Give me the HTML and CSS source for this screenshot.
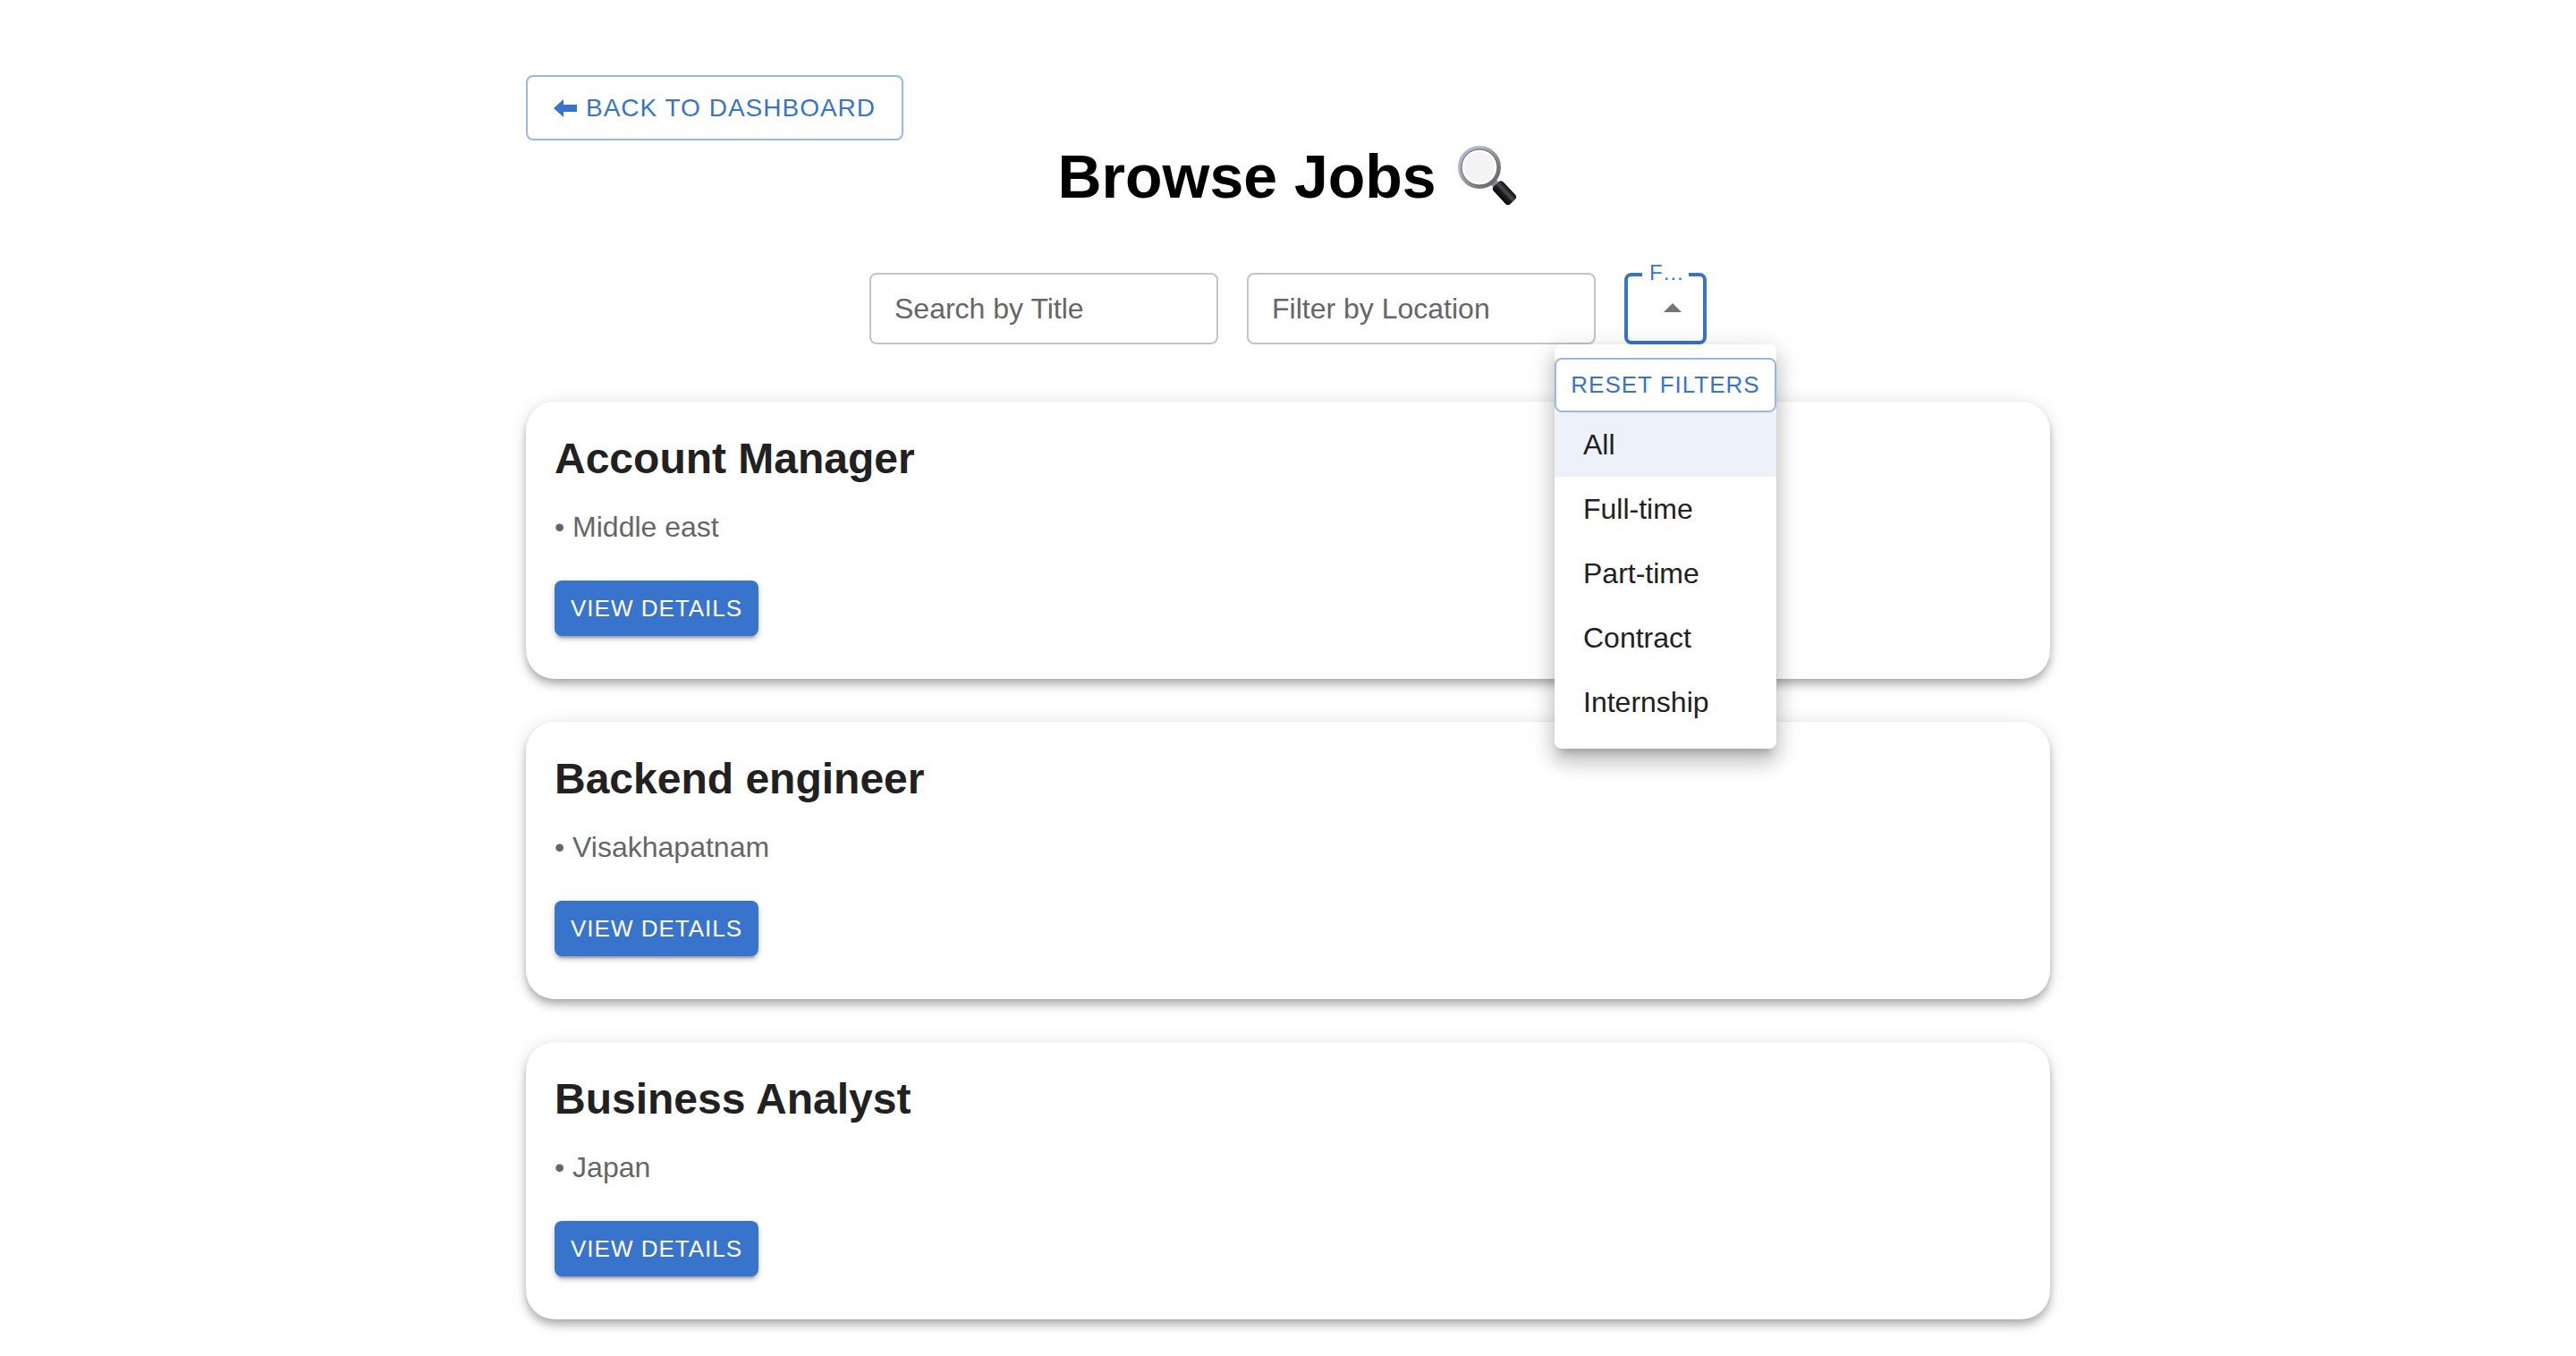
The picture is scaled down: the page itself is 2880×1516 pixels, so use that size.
FILE: index.html
```html
<!DOCTYPE html>
<html lang="en">
<head>
<meta charset="utf-8">
<title>Browse Jobs</title>
<meta name="viewport" content="width=device-width, initial-scale=1">
<link rel="stylesheet" href="styles.css">
</head>
<body>
<main class="container">
  <button type="button" class="btn btn-outlined">
    <svg class="btn-arrow" viewBox="0 0 26 20" aria-hidden="true"><path d="M0 10 11 0v6h15v8H11v6z"/></svg>
    <span>BACK TO DASHBOARD</span>
  </button>

  <h1 class="page-title">
    <span>Browse Jobs</span>
    <svg class="title-icon" viewBox="0 0 68 68" aria-hidden="true">
      <defs>
        <linearGradient id="rim" x1="0" y1="0" x2="1" y2="1">
          <stop offset="0" stop-color="#8fb4ea"/>
          <stop offset=".25" stop-color="#b4b8be"/>
          <stop offset="1" stop-color="#58595c"/>
        </linearGradient>
        <linearGradient id="grip" x1="0" y1="1" x2="0" y2="0">
          <stop offset="0" stop-color="#08090a"/>
          <stop offset=".4" stop-color="#1b1d20"/>
          <stop offset=".6" stop-color="#4a4e53"/>
          <stop offset="1" stop-color="#0c0d0e"/>
        </linearGradient>
      </defs>
      <path d="M36 43l6-6 5 5-6 6z" fill="#8c8e91"/>
      <rect x="39" y="45" width="27" height="15" rx="4" transform="rotate(47 52 52)" fill="url(#grip)"/>
      <circle cx="24" cy="24" r="22" fill="#f3f3f3" stroke="url(#rim)" stroke-width="4"/>
      <circle cx="24" cy="24" r="20" fill="none" stroke="#5b5d60" stroke-width="1"/>
      <circle cx="24" cy="24" r="18" fill="none" stroke="#fff" stroke-width="2"/>
    </svg>
  </h1>

  <form class="filters">
    <input class="field" type="text" aria-label="Search by Title" placeholder="Search by Title">
    <input class="field" type="text" aria-label="Filter by Location" placeholder="Filter by Location">
    <div class="select-field">
      <select class="select" id="job-type">
        <option value="" label=" "></option>
        <option>Full-time</option>
        <option>Part-time</option>
        <option>Contract</option>
        <option>Internship</option>
      </select>
      <label class="select-label" for="job-type">F…</label>
      <svg class="select-arrow" viewBox="0 0 24 24" aria-hidden="true"><path d="M7 14l5-5 5 5z"/></svg>
      <div class="menu">
        <button type="reset" class="btn btn-outlined btn-small">RESET FILTERS</button>
        <ul class="menu-list" role="listbox" aria-label="Job type">
          <li class="menu-item is-selected" role="option" aria-selected="true">All</li>
          <li class="menu-item" role="option">Full-time</li>
          <li class="menu-item" role="option">Part-time</li>
          <li class="menu-item" role="option">Contract</li>
          <li class="menu-item" role="option">Internship</li>
        </ul>
      </div>
    </div>
  </form>

  <section class="jobs">
    <article class="card">
      <h2 class="card-title">Account Manager</h2>
      <p class="card-location">• Middle east</p>
      <button type="button" class="btn btn-contained btn-small">VIEW DETAILS</button>
    </article>
    <article class="card">
      <h2 class="card-title">Backend engineer</h2>
      <p class="card-location">• Visakhapatnam</p>
      <button type="button" class="btn btn-contained btn-small">VIEW DETAILS</button>
    </article>
    <article class="card">
      <h2 class="card-title">Business Analyst</h2>
      <p class="card-location">• Japan</p>
      <button type="button" class="btn btn-contained btn-small">VIEW DETAILS</button>
    </article>
  </section>
</main>
</body>
</html>
```

FILE: styles.css
```css
:root {
  --primary: #3873cc;
  --primary-border: #9ab8e6;
  --text: #212121;
  --text-secondary: #666;
}

* {
  box-sizing: border-box;
}

body {
  margin: 0;
  background: #fff;
  color: var(--text);
  font: 32px/48px "Liberation Sans", Arial, sans-serif;
}

.container {
  display: flex;
  flex-direction: column;
  max-width: 1800px;
  margin: 0 auto;
  padding: 84px 48px 32px;
}

.btn {
  display: inline-flex;
  align-items: center;
  align-self: flex-start;
  justify-content: center;
  gap: 10px;
  padding: 10px 29px;
  border: 0;
  border-radius: 8px;
  font: inherit;
  font-size: 28px;
  line-height: 49px;
  letter-spacing: 1px;
  white-space: nowrap;
  cursor: pointer;
}

.btn-small {
  padding: 6px 18px;
  font-size: 26px;
  line-height: 46px;
}

.btn-outlined {
  border: 2px solid var(--primary-border);
  background: #fff;
  color: var(--primary);
}

.btn-contained {
  padding: 8px 18px;
  background: var(--primary);
  color: #fff;
  box-shadow: 0 6px 2px -4px rgba(0, 0, 0, .2), 0 4px 4px rgba(0, 0, 0, .14), 0 2px 10px rgba(0, 0, 0, .12);
}

.btn-arrow {
  width: 26px;
  height: 20px;
  fill: currentColor;
}

.page-title {
  display: flex;
  align-items: center;
  justify-content: center;
  gap: 24px;
  margin: 0 0 68px;
  color: #000;
  font-size: 68px;
  line-height: 80px;
}

.title-icon {
  width: 68px;
  height: 68px;
}

.filters {
  display: flex;
  flex-wrap: wrap;
  justify-content: center;
  gap: 32px;
  margin-bottom: 64px;
}

.field {
  width: 390px;
  height: 80px;
  padding: 0 26px;
  border: 2px solid #c4c4c4;
  border-radius: 8px;
  background: #fff;
  color: var(--text);
  font: inherit;
}

.field::placeholder {
  color: var(--text-secondary);
  opacity: 1;
}

.select-field {
  position: relative;
  width: 92px;
}

.select {
  display: block;
  width: 100%;
  height: 80px;
  border: 4px solid var(--primary);
  border-radius: 8px;
  background: #fff;
  font: inherit;
  appearance: none;
}

.select-label {
  position: absolute;
  top: -16px;
  left: 20px;
  width: 52px;
  padding-left: 8px;
  background: #fff;
  color: var(--primary);
  font-size: 24px;
  line-height: 32px;
}

.select-arrow {
  position: absolute;
  top: 16px;
  right: 14px;
  width: 48px;
  height: 48px;
  fill: #757575;
  pointer-events: none;
}

.menu {
  position: absolute;
  top: 100%;
  left: 50%;
  z-index: 1;
  display: flex;
  flex-direction: column;
  width: 248px;
  padding: 15px 0 16px;
  border-radius: 8px;
  background: #fff;
  box-shadow: 0 10px 10px -6px rgba(0, 0, 0, .2), 0 16px 20px 2px rgba(0, 0, 0, .14), 0 6px 28px 4px rgba(0, 0, 0, .12);
  transform: translateX(-50%);
}

.menu .btn {
  align-self: stretch;
  line-height: 45px;
}

.menu-list {
  margin: 0;
  padding: 0;
  list-style: none;
}

.menu-item {
  padding: 12px 32px;
}

.menu-item.is-selected {
  background: #edf2fa;
}

.jobs {
  display: flex;
  flex-direction: column;
  gap: 48px;
}

.card {
  padding: 32px 32px 48px;
  border-radius: 32px;
  background: #fff;
  box-shadow: 0 4px 8px -2px rgba(0, 0, 0, .2), 0 8px 10px rgba(0, 0, 0, .14), 0 2px 20px rgba(0, 0, 0, .12);
}

.card-title {
  margin: 0 0 20px;
  font-size: 48px;
  line-height: 64px;
}

.card-location {
  margin: 0 0 36px;
  color: var(--text-secondary);
}
```
